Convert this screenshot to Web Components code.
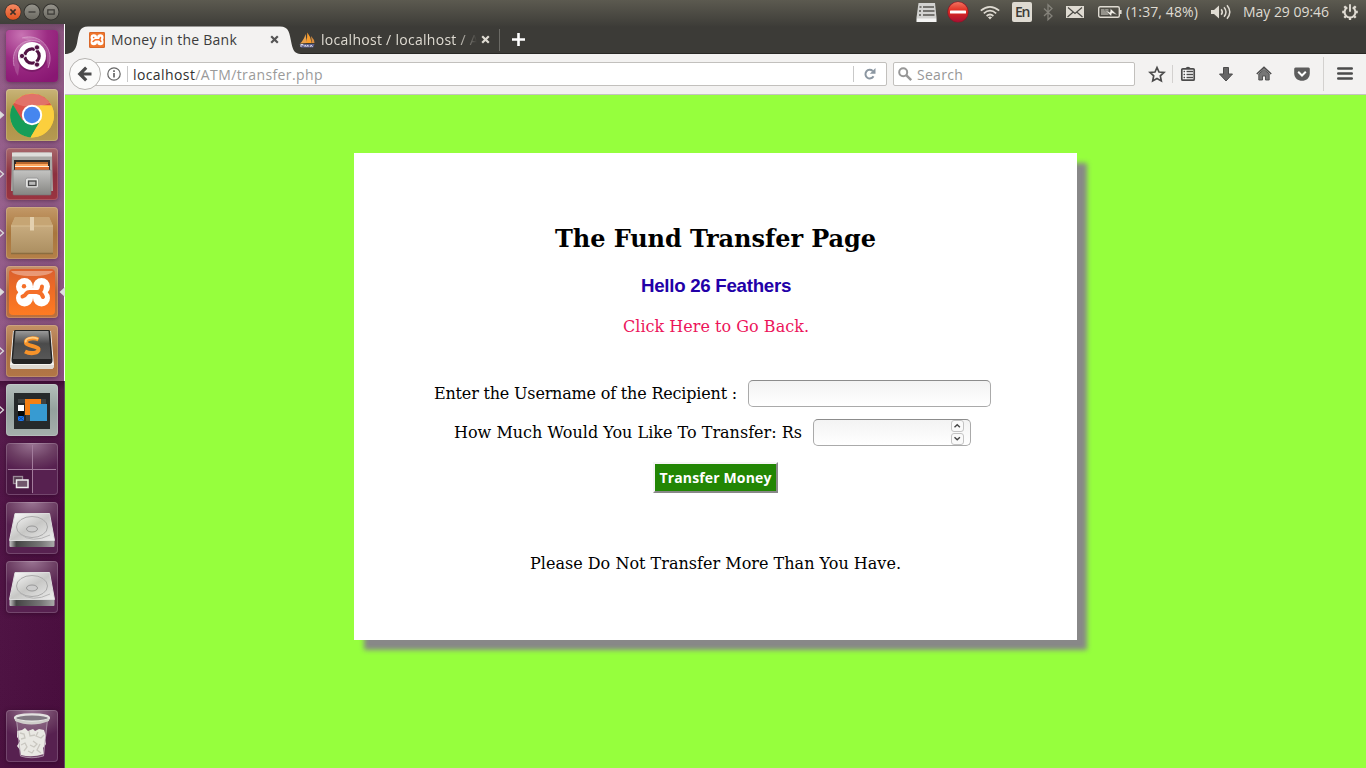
<!DOCTYPE html>
<html lang="en">
<head>
<meta charset="utf-8">
<title>Money in the Bank</title>
<style>
html,body{margin:0;height:100%;overflow:hidden}
body{font-family:"Open Sans","Noto Sans",sans-serif;font-size:14px}
</style>
</head>
<body>
<ubuntu-desktop></ubuntu-desktop>
<script>
/* XAMPP mark: four white lobes with an orange bone through the middle */
const MARK=`<g fill="#fff"><circle cx="18.500" cy="20.500" r="8.500"/><circle cx="35.500" cy="20.500" r="8.500"/><circle cx="18.500" cy="32" r="8.500"/><circle cx="35.500" cy="32" r="8.500"/><path d="M19 21.500h16v10H19z"/></g><circle cx="18" cy="20.300" r="2.200" fill="#f56f29"/><path d="M16.500 30.500q2.500-.5 4-3.200 1-1.300 3-1.300h8q4 0 4.500-5.500M32 26.500q3.500 0 5 4.500" fill="none" stroke="#f56f29" stroke-width="4" stroke-linecap="round"/>`;
const ICONS = {
/* window buttons */
close:`<circle cx="9" cy="9" r="8.4" fill="#33322e"/><circle cx="9" cy="9" r="7.7" fill="url(#a)"/><path d="M6.4 6.4l5.2 5.2M11.6 6.4l-5.2 5.2" stroke="#3b3028" stroke-width="1.5"/><defs><linearGradient id="a" x2="0" y2="1"><stop stop-color="#f58a63"/><stop offset="1" stop-color="#e0531f"/></linearGradient></defs>`,
min:`<circle cx="9" cy="9" r="8.4" fill="#33322e"/><circle cx="9" cy="9" r="7.5" fill="url(#a)"/><path d="M5.5 9h7" stroke="#3b3a36" stroke-width="1.3"/><defs><linearGradient id="a" x2="0" y2="1"><stop stop-color="#96948c"/><stop offset="1" stop-color="#6c6a62"/></linearGradient></defs>`,
max:`<circle cx="9" cy="9" r="8.4" fill="#33322e"/><circle cx="9" cy="9" r="7.5" fill="url(#a)"/><path d="M5.8 6.8h6.4v4.4H5.8z" fill="none" stroke="#3b3a36" stroke-width="1.2"/><defs><linearGradient id="a" x2="0" y2="1"><stop stop-color="#96948c"/><stop offset="1" stop-color="#6c6a62"/></linearGradient></defs>`,
/* indicators */
notes:`<path d="M2.500 0h16.500l1.500 14.500v4.500H.5v-4.500z" fill="#d2d2d0"/><path d="M.8 15.500h19.400v3.500H.8z" fill="#f4f4f3"/><path d="M3.500 4h2M7 4h11M3 8h2M7 8h11.500M3 12h2M7 12h11.500" stroke="#55544f" stroke-width="1.4"/>`,
stop:`<circle cx="11" cy="11" r="10.6" fill="#8f1526"/><circle cx="11" cy="11" r="10" fill="url(#a)"/><rect x="3" y="9.4" width="16" height="3.2" rx=".6" fill="#fff"/><defs><linearGradient id="a" x2="0" y2="1"><stop stop-color="#f0745f"/><stop offset=".45" stop-color="#e02b20"/><stop offset="1" stop-color="#a80f33"/></linearGradient></defs>`,
wifi:`<g fill="none" stroke="#dfdbd2" stroke-width="1.7"><path d="M.8 5.6Q10 -2 19.2 5.6" /><path d="M3.8 8.4Q10 3 16.2 8.4"/><path d="M6.6 11Q10 8 13.4 11"/></g><path d="M7.9 12.3Q10 10.8 12.1 12.3L10 14.5z" fill="#dfdbd2"/>`,
bt:`<path d="M1 4.5l8 7.5-4 3.7V.8l4 3.7-8 7.5" fill="none" stroke="#85837b" stroke-width="1.3"/>`,
mail:`<path d="M0 0h18v12H0z" fill="#dfdbd2"/><path d="M2 1.5l7 6 7-6M1.5 11l5.5-4.8M16.5 11L11 6.2" fill="none" stroke="#4b4a45" stroke-width="1.2"/>`,
bat:`<rect x=".7" y=".7" width="20.6" height="10.6" rx="1.5" fill="none" stroke="#dfdbd2" stroke-width="1.4"/><path d="M22 4h1.6v4H22z" fill="#dfdbd2"/><path d="M3 3h7.5v6H3z" fill="#96948c"/><path d="M6 3.500l6 2.800.5-3.800 7 6.500-5.500-1.800-.8 3z" fill="#f2efe8" stroke="#4b4a45" stroke-width=".5"/>`,
vol:`<path d="M0 5h3l5-4.5v13L3 9H0z" fill="#dfdbd2"/><g fill="none" stroke="#dfdbd2" stroke-width="1.5"><path d="M10.2 4.2q2.2 2.8 0 5.6M13 2.2q4 4.8 0 9.6M16 .3q5.6 6.7 0 13.4"/></g>`,
gear:`<g stroke="#dfdbd2" fill="none"><path d="M5.3 3.4A5.4 5.4 0 1 0 10.7 3.4" stroke-width="2"/><path d="M8 .2v7.6" stroke-width="1.9"/><path d="M.2 8h2.5M13.3 8h2.5M8 13.5v2.4M2.3 13.7l1.8-1.8M13.7 13.7l-1.8-1.8M2.3 2.3l1.8 1.8M13.7 2.3l-1.8 1.8" stroke-width="2.3"/></g>`,
/* tabs */
xampp:`<rect width="16" height="16" rx="1.2" fill="#d9682a"/><rect x="1" y="1" width="14" height="14" fill="#f0762c"/><g transform="translate(-2.200 -2.200) scale(.38)">${MARK}</g>`,
pma:`<path d="M1 11.500Q5 8 6.500 2l1.500 9z" fill="#e8a04a"/><path d="M7 11Q8.500 6 8.300.5 12 5 12.800 11z" fill="#f89c2c"/><path d="M12 4q3.500 3.500 3.500 7H13z" fill="#d88d3f"/><path d="M.5 12h15l-1.300 3.500H2z" fill="#5f628d"/><path d="M2 15v-2.500h2v1.300M6 15v-2l1.500 1.300L9 13v2M11 15l1.200-2 1.300 2" stroke="#d8d8e4" fill="none"/>`,
x:`<path d="M1.200 1.200l6.600 6.600M7.800 1.200L1.200 7.800" stroke="currentColor" stroke-width="2.200"/>`,
plus:`<path d="M6.500 0v13M0 6.500h13" stroke="#fff" stroke-width="2.600"/>`,
tab:`<path d="M0 28c8-.4 10.500-4 12-10.500C14 7 14 .5 23 .5h192c9 0 9.500 6.500 11.500 17C228 24.500 230 28 236 28z" fill="#f3f2f1"/>`,
/* toolbar */
back:`<circle cx="16" cy="16" r="15.500" fill="#fbfbfa" stroke="#b5b3b0"/><path d="M17.200 9.700L10.800 16l6.400 6.300M11.500 16H22.500" fill="none" stroke="#4b4b4b" stroke-width="3.200"/>`,
info:`<circle cx="7" cy="7" r="6.200" fill="none" stroke="#666" stroke-width="1.200"/><path d="M7 6v4.600M7 3.200v1.700" stroke="#666" stroke-width="1.700"/>`,
reload:`<path d="M9.500 8.300A4.300 4.300 0 1 1 8.700 3" fill="none" stroke="#8b96a1" stroke-width="2"/><path d="M11.500 0v5.700H5.800z" fill="#8b96a1"/>`,
search:`<circle cx="5.200" cy="5.200" r="4" fill="none" stroke="#979797" stroke-width="2"/><path d="M8.200 8.200l5 5" stroke="#979797" stroke-width="2.500"/>`,
star:`<path d="M8 1.500l2 4.500 5 .5-3.700 3.400 1 5L8 12.400l-4.300 2.500 1-5L1 6.500 6 6z" fill="none" stroke="#4b4b4b" stroke-width="1.700"/>`,
list:`<path d="M4 2.500Q7 -1 10 2.500z" fill="#4b4b4b"/><rect x=".8" y="2.800" width="12.400" height="11.400" rx="1" fill="#fff" stroke="#4b4b4b" stroke-width="1.700"/><path d="M2.500 5.500h1.600M5.500 5.500h6.500M2.500 8.500h1.600M5.500 8.500h6.500M2.500 11.500h1.600M5.500 11.500h6.500" stroke="#4b4b4b" stroke-width="1.300"/>`,
down:`<path d="M4.500.5h5V7h4L7 14 .5 7h4z" fill="#666" stroke="#4b4b4b"/>`,
home:`<path d="M2.800 8L8 3.400 13.200 8v6H9.500v-4h-3v4H2.800z" fill="#777" stroke="#4b4b4b" stroke-width=".9"/><path d="M.8 8L8 1.300 15.200 8" fill="none" stroke="#4b4b4b" stroke-width="1.600"/>`,
pocket:`<path d="M1.500.5h13q1.300 0 1.300 1.500v4.200c0 10-15.600 10-15.600 0V2Q.2.500 1.500.5z" fill="#5d5d5d"/><path d="M4.200 4.800L8 8.500l3.800-3.700" fill="none" stroke="#fff" stroke-width="2"/>`,
menu:`<path d="M1.200 1.500h13.600M1.200 6.500h13.600M1.200 11.500h13.600" stroke="#4b4b4b" stroke-width="2.400" stroke-linecap="round"/>`,
up:`<path d="M2.500 6.300l2.700-2.600 2.700 2.600" fill="none" stroke="#444" stroke-width="1.400"/>`,
dn:`<path d="M2.500 3.200l2.700 2.600 2.700-2.600" fill="none" stroke="#444" stroke-width="1.400"/>`,
/* launcher artwork */
dash:`<defs><radialGradient id="g" cx=".3" cy=".1" r="1"><stop stop-color="#c873b3"/><stop offset=".5" stop-color="#9c2c83"/><stop offset="1" stop-color="#891773"/></radialGradient></defs><rect width="52" height="52" rx="4" fill="url(#g)"/><g fill="none" stroke="#e2b4d8" opacity=".5"><path d="M8 36C4 18 18 6 34 12"/><path d="M16 8C34 2 50 20 42 38"/></g><path d="M8 36C4 18 18 6 34 12L26 26 14 32 12 46Q9 42 8 36zM42 38C50 20 34 2 16 8L32 14 40 26z" fill="#fff" opacity=".17"/><circle cx="26" cy="27" r="15" fill="#4a0b3e" opacity=".3"/><circle cx="26" cy="26" r="14" fill="#fff"/><circle cx="26" cy="26" r="7.200" fill="none" stroke="#521344" stroke-width="3.200"/><path d="M26 26H12M26 26l7-12M26 26l7 12" stroke="#fff" stroke-width="1.400"/><circle cx="26" cy="26" r="5.300" fill="#fff"/><g fill="#521344" stroke="#fff" stroke-width=".8"><circle cx="16" cy="26" r="2.600"/><circle cx="31" cy="17.400" r="2.600"/><circle cx="31" cy="34.600" r="2.600"/></g>`,
chrome:`<circle cx="26" cy="26.500" r="22" fill="#f8c937"/><path d="M26 26.500L15.500 32.500 7 15.500A22 22 0 0 1 45.500 16.500H26z" fill="#db5349"/><path d="M7 15.500A22 22 0 0 0 24.500 48.400L34 32 26 26.500 16.500 31.500z" fill="#159d58"/><path d="M45.500 16.500A22 22 0 0 1 24.500 48.400L35 31.500 34 16.500z" fill="#fbcf3d"/><path d="M8 14A22 22 0 0 1 44 14Q26 22 8 14z" fill="#fff" opacity=".18"/><circle cx="26" cy="26" r="10.200" fill="#fff"/><circle cx="26" cy="26" r="8.200" fill="#4686ef"/>`,
files:`<defs><linearGradient id="g" x2="0" y2="1"><stop stop-color="#c4c4c2"/><stop offset="1" stop-color="#858582"/></linearGradient></defs><path d="M5 43l1-36q0-2.500 3-2.500h34q3 0 3 2.500l1 36z" fill="#a9a9a5"/><path d="M6 4.500h40v4H6z" fill="#dededb"/><path d="M8 12h36v12H8z" fill="#302b28"/><path d="M10 14h32v8H10z" fill="#b9672c"/><path d="M9 16h33v2H9z" fill="#ffa75d"/><path d="M9 18h34v1.200H9z" fill="#fff0d9"/><path d="M9 19h34v4H9z" fill="#d8692d"/><path d="M7 22h38v24q0 1-1 1H8q-1 0-1-1z" fill="url(#g)" stroke="#777" stroke-width=".6"/><rect x="19.500" y="30" width="13" height="10" rx="2" fill="#e4e4e2" stroke="#999"/><rect x="22.500" y="33" width="7.500" height="4.500" fill="#bbb" stroke="#444" stroke-width="1.300"/>`,
box:`<defs><linearGradient id="g" x2="0" y2="1"><stop stop-color="#d0b488"/><stop offset="1" stop-color="#ab8e60"/></linearGradient></defs><path d="M9 10h34l4 9v28H5V19z" fill="url(#g)"/><path d="M9 10h34l4 9H5z" fill="#c6a574"/><path d="M5 19h42" stroke="#d8bd92"/><path d="M24 10h4v13.500h-4z" fill="#e3d0af"/><path d="M5 46.500h42" stroke="#8b6d40" stroke-width="1.500"/>`,
xl:`<defs><linearGradient id="g" x2="0" y2="1"><stop stop-color="#d9602f"/><stop offset=".4" stop-color="#ec6a26"/><stop offset="1" stop-color="#ff7b22"/></linearGradient></defs><rect x="3" y="3" width="46" height="46" rx="4" fill="url(#g)"/><path d="M5 5h42Q44 10 26 10T5 5z" fill="#fff" opacity=".35"/>${MARK}`,
subl:`<defs><linearGradient id="g" x2="0" y2="1"><stop stop-color="#9a9a9a"/><stop offset=".45" stop-color="#4b4b4b"/><stop offset="1" stop-color="#575757"/></linearGradient></defs><path d="M7 6h38l3 34q0 4-3 4H7q-3 0-3-4z" fill="#f4f3ef"/><path d="M4 40h44q0 4-3 4H7q-3 0-3-4z" fill="#ddd9d2"/><path d="M9 5h34q1 0 1.300 2L46.500 35q0 4-3 4h-35q-3 0-3-4L7.700 7Q8 5 9 5z" fill="#242424"/><path d="M9.500 6h33L45 34H7z" fill="url(#g)"/><path d="M32.500 14.500c-6-2.500-14-.5-12.500 3.500 1 3 11.500 3 12.500 6 1 4-7.500 5.500-13.500 2.500" fill="none" stroke="#f7932a" stroke-width="4"/><path d="M32 13.800c-6-2.500-14-.5-12 3.500" fill="none" stroke="#ffce82" stroke-width="1.800"/>`,
app:`<rect x="8" y="9" width="36" height="36" fill="#262a2b"/><path d="M12 15h8v4h-8zM20 31h9v6h-9zM34 15h6v6h-6z" fill="#3e4343"/><path d="M19 15h16v16H19z" fill="#f58013"/><path d="M12 21h6v6h-6z" fill="#fff"/><path d="M12 27h6v5h-6z" fill="#080808"/><path d="M12 32h6v5h-6z" fill="#1e78ee"/><path d="M12 32l6 5m0-5l-6 5" stroke="#0c4a9b"/><path d="M24 20h17v17H24z" fill="#379bd2"/>`,
work:`<path d="M26.500 2v48M2 26.500h48" stroke="#a27c9c"/><path d="M1 27h25v24H1z" fill="#33082b" opacity=".35"/><rect x="7.500" y="33.500" width="9" height="7" fill="#563b50" stroke="#9c8a98" stroke-width="1.300"/><rect x="10.500" y="37" width="11.500" height="7.500" fill="#70566b" stroke="#eee" stroke-width="1.500"/>`,
disk:`<defs><linearGradient id="g" x2="1" y2="1"><stop stop-color="#fff"/><stop offset=".5" stop-color="#c7c7c5"/><stop offset="1" stop-color="#eee"/></linearGradient><linearGradient id="h"><stop stop-color="#c9c9c9"/><stop offset=".15" stop-color="#444"/><stop offset=".7" stop-color="#777"/><stop offset="1" stop-color="#aaa"/></linearGradient></defs><path d="M3.500 38.500h45V44q0 1-1 1h-43q-1 0-1-1z" fill="url(#h)"/><path d="M9 11.500h34.500l5 27h-45z" fill="url(#g)" stroke="#ddd"/><ellipse cx="26" cy="25" rx="15.500" ry="10.500" fill="none" stroke="#aaa"/><path d="M14 32Q26 42 44 33" fill="none" stroke="#b5b5b5"/><ellipse cx="26" cy="27" rx="5.500" ry="3" fill="#ccc" stroke="#999"/>`,
trash:`<path d="M10 9l4 37q12 4 24 0l4-37z" fill="#b69fb2" opacity=".3"/><path d="M11 21l5-1 3-2 3 3 5-2 2 2 4-2 5 1 2 6-1 4 1 4-3 4 1 6q-12 4-23 1l-1-5-3-4 3-5-3-4z" fill="#e9e8e3"/><path d="M14 23l4 1 1 4-4 1M23 21l1 5 5-1M32 22l-2 4 5 2 3-3M15 35l4-2 2 4-3 4M27 31l4 3-3 3-4-2M34 34l-3 6 4 3M22 41l4 2 2-3" fill="none" stroke="#c9c7c0" stroke-width="1.300"/><path d="M10.500 9l4 37q11 3.500 23 0l4-37" fill="none" stroke="#b59fb1" opacity=".8"/><ellipse cx="26" cy="8" rx="17" ry="3.600" fill="#817982" stroke="#e4e3e1" stroke-width="2.200"/><path d="M9 8.500v2.500q16 7 34 0V8.500q-17 7-34 0z" fill="#d0cecb"/>`
};
function define(name, html, setup){
  const t = document.createElement('template');
  t.innerHTML = html;
  customElements.define(name, class extends HTMLElement{
    connectedCallback(){
      if(this.shadowRoot) return;
      this.attachShadow({mode:'open'}).append(document.importNode(t.content,true));
      if(setup) setup.call(this,this.shadowRoot);
    }
  });
}

/* <ui-icon name box="w h"> : vector glyph from the set above */
define('ui-icon','<style>:host{display:block;flex:none}span,svg{display:block;overflow:visible}</style><span></span>',function(r){
  const [w,h]=this.getAttribute('box').split(' ');
  r.querySelector('span').innerHTML=`<svg width="${w}" height="${h}" viewBox="0 0 ${w} ${h}">${ICONS[this.getAttribute('name')]}</svg>`;
});

/* <fit-text width> : one line of text tracked to a given advance width */
define('fit-text','<style>:host{display:block;flex:none;white-space:nowrap}span{display:inline-block}</style><span><slot></slot></span>',function(r){
  const s=r.querySelector('span'),w=+this.getAttribute('width'),n=(this.getAttribute('chars')||this.textContent.length);
  this.style.width=w+'px';
  s.style.letterSpacing=(w-s.getBoundingClientRect().width)/n+'px';
});

define('top-panel',`<style>
:host{display:flex;align-items:center;height:24px;background:linear-gradient(#5c5a50,#403f3a);color:#dfdbd2;line-height:24px}
.w{display:flex;gap:1px;padding-left:4px;margin:-1px auto 0 0}
.en{width:20px;height:20px;border-radius:2px;background:#dfdbd2;color:#3c3b37;display:flex;justify-content:center;font-size:14px;line-height:20px;font-weight:600}
</style>
<div class="w"><ui-icon name="close" box="18 18"></ui-icon><ui-icon name="min" box="18 18"></ui-icon><ui-icon name="max" box="18 18"></ui-icon></div>
<ui-icon name="notes" box="21 19" style="margin-right:10px"></ui-icon>
<ui-icon name="stop" box="22 22" style="margin-right:11px"></ui-icon>
<ui-icon name="wifi" box="20 14" style="margin-right:12px"></ui-icon>
<div class="en" style="margin-right:11px"><fit-text width="14">En</fit-text></div>
<ui-icon name="bt" box="10 16" style="margin-right:13px"></ui-icon>
<ui-icon name="mail" box="18 12" style="margin-right:14px"></ui-icon>
<ui-icon name="bat" box="24 12" style="margin-right:4px"></ui-icon>
<fit-text width="72" style="margin-right:13px">(1:37, 48%)</fit-text>
<ui-icon name="vol" box="20 14" style="margin-right:12px"></ui-icon>
<fit-text width="86" style="margin-right:13px">May 29 09:46</fit-text>
<ui-icon name="gear" box="16 16" style="margin-right:8px"></ui-icon>`);

define('launcher-tile',`<style>
:host{display:block;position:relative;width:52px;height:52px;border-radius:4px;background:var(--tile,radial-gradient(ellipse 40px 28px at 50% 0,#9a7593,#6c3e63 60%,#572150));box-shadow:inset 0 0 0 1px rgba(255,255,255,.17),0 1px 5px rgba(30,0,25,.45)}
.p{position:absolute;left:-7px;top:21px;display:none}
:host([run]) .l{display:block}
:host([active]) .r{display:block;left:auto;right:-7px}
</style><slot></slot>
<svg class="p l" width="6" height="10"><path d="M0 1l4.500 4L0 9z" stroke="#ddd" stroke-width="1.200"/></svg>
<svg class="p r" width="6" height="10"><path d="M6 0L.5 5 6 10z" fill="#ddd"/></svg>`,function(r){
  r.querySelector('.l path').setAttribute('fill',this.getAttribute('run')==='open'?'none':'#ddd');
  if(this.hasAttribute('tile')) this.style.setProperty('--tile',this.getAttribute('tile'));
});

define('side-launcher',`<style>
:host{display:flex;flex-direction:column;gap:7px;box-sizing:border-box;width:65px;padding:6px 6px;border-right:1px solid #4b3349;border-image:linear-gradient(#fff 0 357px,#5c5260 357px) 1;border-width:0 1px 0 0;background:linear-gradient(90deg,rgba(255,255,255,.02),rgba(0,0,0,.02)),linear-gradient(#714969 0,#905985 8px,#955e8b 180px,#8d5382 357px,#3f0c36 357px,#571b4c 366px,#4e1043 480px,#480d3d)}
launcher-tile:last-child{margin-top:auto}
</style>
<launcher-tile tile="#8f1f79"><ui-icon name="dash" box="52 52"></ui-icon></launcher-tile>
<launcher-tile run tile="linear-gradient(#c9b478,#ab9144 50%,#b69a52)"><ui-icon name="chrome" box="52 52"></ui-icon></launcher-tile>
<launcher-tile run="open" tile="linear-gradient(#a7686c,#8c303f 50%,#9a3440)"><ui-icon name="files" box="52 52"></ui-icon></launcher-tile>
<launcher-tile run="open" tile="linear-gradient(#c39968,#a8763d 50%,#b58048)"><ui-icon name="box" box="52 52"></ui-icon></launcher-tile>
<launcher-tile run active tile="linear-gradient(#c7916a,#b3683c 50%,#bb703e)"><ui-icon name="xl" box="52 52"></ui-icon></launcher-tile>
<launcher-tile run="open" tile="linear-gradient(#c39166,#a96f42 50%,#b27646)"><ui-icon name="subl" box="52 52"></ui-icon></launcher-tile>
<launcher-tile run="open" tile="linear-gradient(#b5bfbc,#94a19d 50%,#a5afac)"><ui-icon name="app" box="52 52"></ui-icon></launcher-tile>
<launcher-tile><ui-icon name="work" box="52 52"></ui-icon></launcher-tile>
<launcher-tile><ui-icon name="disk" box="52 52"></ui-icon></launcher-tile>
<launcher-tile><ui-icon name="disk" box="52 52"></ui-icon></launcher-tile>
<launcher-tile><ui-icon name="trash" box="52 52"></ui-icon></launcher-tile>`);

define('tab-strip',`<style>
:host{display:flex;height:30px;box-sizing:border-box;padding-top:2px;background:linear-gradient(#403f3a,#3c3b37 3px,#3c3b37 28.500px,#292825 29px)}
.a{display:grid;width:236px;height:28px}
.a>*{grid-area:1/1}
.a>ui-icon:first-child{height:28px}
.c{display:flex;align-items:center;padding:0 0 1px 24px;color:#3c3c3c}
.b{display:flex;align-items:center;padding-bottom:1px;color:#dfdbd2}
.f{width:158px;-webkit-mask:linear-gradient(90deg,#000 136px,transparent 156px);margin:0 2px 0 6px}
i{width:1px;height:22px;background:#6b6a65;margin:0 12px 0 9px}
</style>
<div class="a"><ui-icon name="tab" box="236 28"></ui-icon>
<div class="c"><ui-icon name="xampp" box="16 16"></ui-icon><fit-text width="126" style="margin:0 33px 0 6px">Money in the Bank</fit-text><ui-icon name="x" box="9 9" style="color:#555"></ui-icon></div></div>
<div class="b" style="margin-left:-2px"><ui-icon name="pma" box="16 16"></ui-icon><div class="f"><fit-text width="158">localhost / localhost / A</fit-text></div><ui-icon name="x" box="9 9"></ui-icon><i></i><ui-icon name="plus" box="13 13"></ui-icon></div>`);

define('nav-bar',`<style>
:host{display:flex;align-items:center;height:41px;box-sizing:border-box;padding-left:4px;background:#f3f2f1;border-bottom:1px solid #c5c3c1}
ui-icon.back{position:relative;z-index:1}
.u,.s{box-sizing:border-box;height:24px;background:#fff;border:1px solid #c2c0bd;border-radius:2px;display:flex;align-items:center}
.u{width:802px;margin-left:-16px;padding-left:21px;color:#9a9a9a}
.u b{font-weight:400;color:#303030}
.u i{width:1px;height:16px;background:#c9c9c9}
.s{width:242px;margin:0 14px 0 6px;padding-left:4px;color:#979797}
.l{width:1px;background:#d3d1cf}
</style>
<ui-icon class="back" name="back" box="32 32"></ui-icon>
<div class="u"><ui-icon name="info" box="14 14"></ui-icon><i style="margin:0 5px 0 6px"></i><fit-text width="190"><b>localhost</b>/ATM/transfer.php</fit-text><i style="margin:0 10px 0 530px"></i><ui-icon name="reload" box="12 12"></ui-icon></div>
<div class="s"><ui-icon name="search" box="14 14"></ui-icon><fit-text width="46" style="margin-left:5px">Search</fit-text></div>
<ui-icon name="star" box="16 16" style="margin-right:7px"></ui-icon><div class="l" style="height:18px;margin-right:8px"></div>
<ui-icon name="list" box="14 15" style="margin:-2px 24px 0 0"></ui-icon>
<ui-icon name="down" box="14 14" style="margin-right:23px"></ui-icon>
<ui-icon name="home" box="16 15" style="margin:-1px 22px 0 0"></ui-icon>
<ui-icon name="pocket" box="16 14" style="margin-right:13px"></ui-icon>
<div class="l" style="height:34px;margin-right:13px"></div>
<ui-icon name="menu" box="16 13" style="margin-top:-1px"></ui-icon>`);

define('form-field',`<style>
:host{display:flex;align-items:center;height:27px;margin-bottom:12px}
.i{box-sizing:border-box;width:var(--w);height:27px;border:1px solid #aaa;border-top-color:#8c8c8c;border-radius:5px;background:linear-gradient(#f3f3f3,#fff);margin:0 6px 0 11px;display:flex;justify-content:flex-end;padding-right:6px}
.n{display:none;flex-direction:column;gap:1px}
:host([number]) .n{display:flex}
.n ui-icon{width:13px;height:12px;box-sizing:border-box;border:1px solid #c4c4c4;border-radius:3px;background:#fafafa}
</style><slot></slot><div class="i"><div class="n"><ui-icon name="up" box="11 10"></ui-icon><ui-icon name="dn" box="11 10"></ui-icon></div></div>`,function(){
  this.style.setProperty('--w',this.getAttribute('field')+'px');
});

define('raised-button',`<style>
:host{display:block}
button{display:flex;align-items:center;justify-content:center;width:125px;height:31px;box-sizing:border-box;padding:0;border:2px solid;border-color:#f6f6f6 #888 #888 #f6f6f6;background:#228604;color:#fff;font:bold 14px "Open Sans","Noto Sans",sans-serif}
</style><button><fit-text width="112" chars="14"><slot></slot></fit-text></button>`);

define('transfer-card',`<style>
:host{display:flex;flex-direction:column;align-items:center;box-sizing:border-box;width:723px;height:487px;padding-top:72px;background:#fff;box-shadow:10px 10px 5px #888;font:16px/19px "DejaVu Serif",serif;color:#000}
h2,h3,p{margin:0;font-weight:inherit;font-size:inherit}
h2{font-size:24px;line-height:28px;font-weight:bold;height:28px;margin-bottom:22px}
h3{font:bold 18.720px/22px "Liberation Sans",Arial,sans-serif;color:#2200a8;height:22px;margin-bottom:20px;padding-left:1px}
.a{color:#ec145a;margin-bottom:44px;padding-left:1px}
</style>
<h2><fit-text width="321">The Fund Transfer Page</fit-text></h2>
<h3><fit-text width="150">Hello 26 Feathers</fit-text></h3>
<p class="a"><fit-text width="186">Click Here to Go Back.</fit-text></p>
<form-field field="243"><fit-text width="303">Enter the Username of the Recipient :</fit-text></form-field>
<form-field field="158" number><fit-text width="348">How Much Would You Like To Transfer: Rs</fit-text></form-field>
<raised-button style="margin:4px 0 61px">Transfer Money</raised-button>
<p><fit-text width="371">Please Do Not Transfer More Than You Have.</fit-text></p>`);

define('ubuntu-desktop',`<style>
:host{display:grid;grid-template:24px 744px/65px 1301px;width:1366px;height:768px}
top-panel{grid-column:1/3}
.b{display:flex;flex-direction:column}
main{flex:1;display:flex;justify-content:center;align-items:flex-start;padding-top:58px;background:#96ff3d}
</style>
<top-panel></top-panel><side-launcher></side-launcher>
<div class="b"><tab-strip></tab-strip><nav-bar></nav-bar><main><transfer-card></transfer-card></main></div>`);
</script>
</body>
</html>
